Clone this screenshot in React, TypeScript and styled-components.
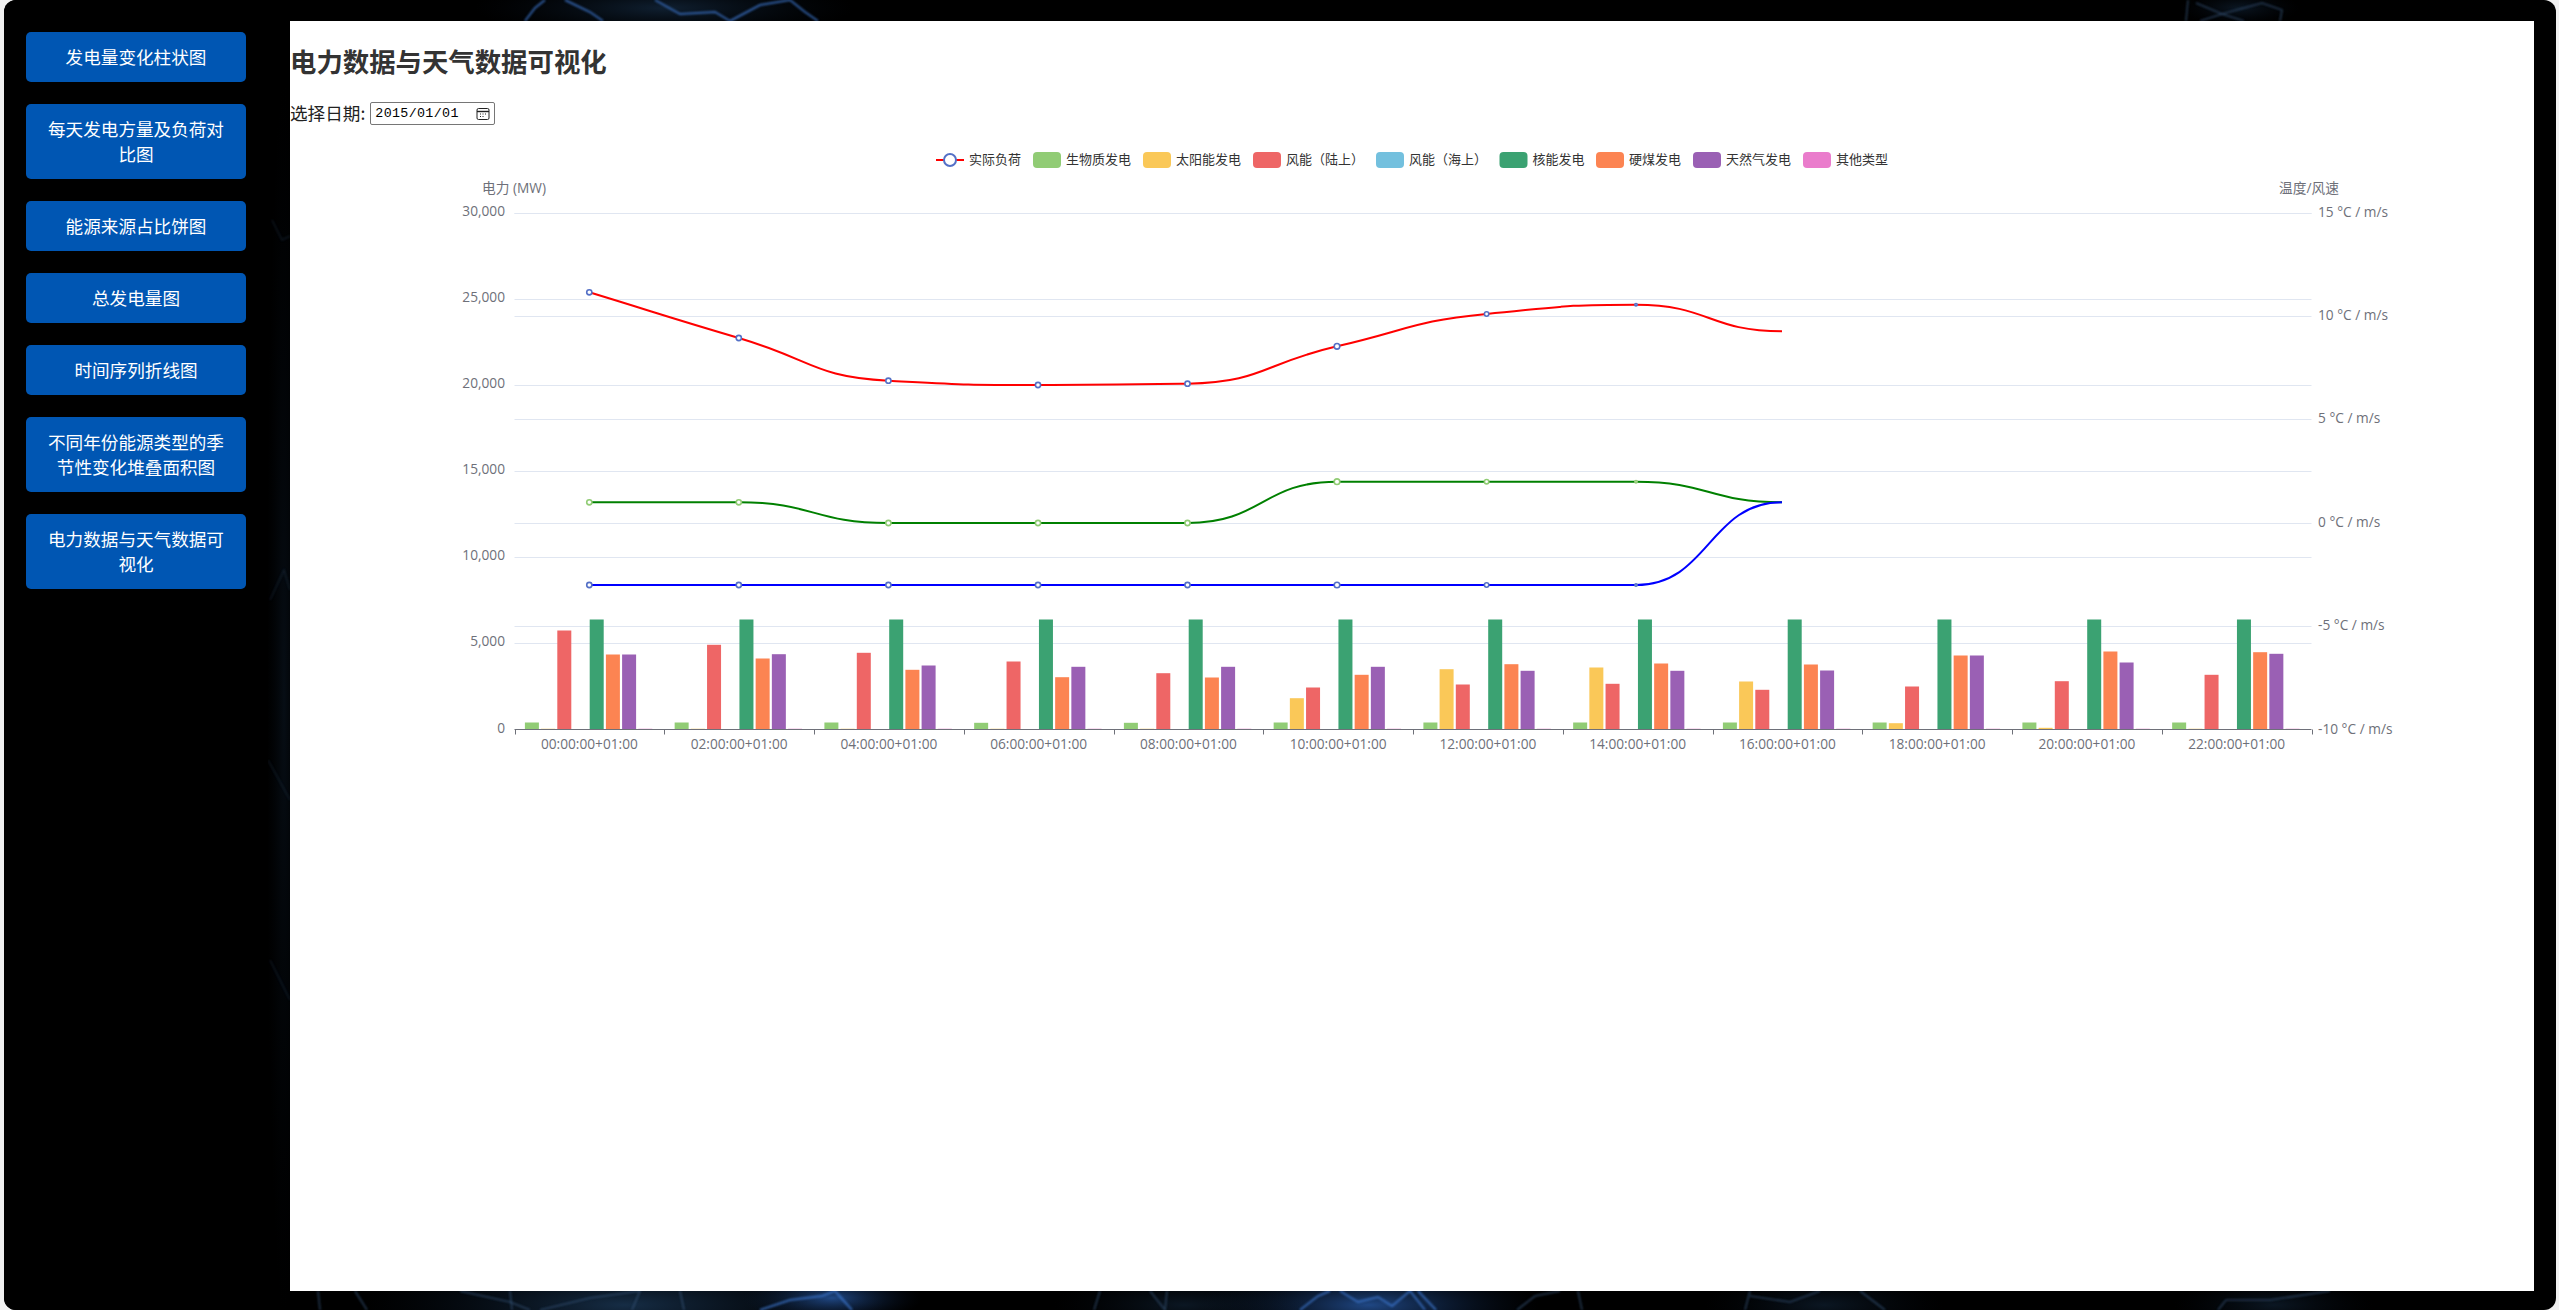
import React from "react";
import styled, { createGlobalStyle } from "styled-components";

const Global = createGlobalStyle`
  html, body { margin: 0; padding: 0; height: 100%; background: #f1f1f1; overflow: hidden; }
  #root { height: 100%; }
`;

const CJK = `"Noto Sans CJK SC", "Noto Sans", sans-serif`;
const LATIN = `"Open Sans", "Noto Sans CJK SC", sans-serif`;

const Page = styled.div`
  height: 1310px;
  padding: 0 3px 0 4px;
  box-sizing: border-box;
  background: #f1f1f1;
  font-family: ${CJK};
`;

const Shell = styled.div`
  position: relative;
  display: flex;
  height: 100%;
  background: #000;
  border-radius: 12px;
  overflow: hidden;
`;

const Backdrop = styled.svg`
  position: absolute;
  inset: 0;
  width: 100%;
  height: 100%;
`;

const Sidebar = styled.nav`
  position: relative;
  flex: 0 0 264px;
  box-sizing: border-box;
  display: flex;
  flex-direction: column;
  gap: 22px;
  padding: 32px 22px;
  background: #000;
`;

const NavButton = styled.button`
  width: 220px;
  box-sizing: border-box;
  padding: 11.5px 18px 13.5px;
  border: 0;
  border-radius: 5px;
  background: #0056b3;
  color: #fff;
  font-family: ${CJK};
  font-size: 17.6px;
  line-height: 25px;
  text-align: center;
`;

const Main = styled.main`
  position: relative;
  flex: 1;
  margin: 21px 22px 19px;
  background: #fff;
  min-width: 0;
`;

const Title = styled.h1`
  margin: 0;
  padding-top: 25px;
  font-family: ${CJK};
  font-size: 26.4px;
  line-height: 30px;
  font-weight: 700;
  color: #333;
`;

const DateRow = styled.div`
  display: flex;
  align-items: center;
  gap: 5px;
  height: 23px;
  margin-top: 26px;
  font-size: 17.6px;
  color: #222;
`;

const DateLabel = styled.span`
  padding-bottom: 2px;
`;

const DateBox = styled.div`
  display: flex;
  align-items: center;
  justify-content: space-between;
  width: 125px;
  height: 23px;
  box-sizing: border-box;
  padding: 0 4px;
  border: 1px solid #767676;
  border-radius: 2px;
  font-family: "Liberation Mono", monospace;
  font-size: 13.33px;
  letter-spacing: 0.35px;
  color: #000;
`;

const ChartSvg = styled.svg`
  display: block;
  margin-top: 5px;
`;

const AxisText = styled.text`
  font-family: ${LATIN};
  font-size: 13.7px;
  fill: #6e7079;
`;

const LegendText = styled.text`
  font-family: ${CJK};
  font-size: 13px;
  fill: #333;
`;

const NAV = [
  "发电量变化柱状图",
  "每天发电方量及负荷对比图",
  "能源来源占比饼图",
  "总发电量图",
  "时间序列折线图",
  "不同年份能源类型的季节性变化堆叠面积图",
  "电力数据与天气数据可视化",
];

const COLORS = ["#91cc75", "#fac858", "#ee6666", "#73c0de", "#3ba272", "#fc8452", "#9a60b4", "#ea7ccc"];

const LEGEND: [string, number][] = [
  ["生物质发电", 1033],
  ["太阳能发电", 1143],
  ["风能（陆上）", 1253],
  ["风能（海上）", 1376],
  ["核能发电", 1499.5],
  ["硬煤发电", 1596],
  ["天然气发电", 1693],
  ["其他类型", 1803],
];

// Bar heights in chart pixels: bio, solar, onshore, offshore, nuclear, coal, gas, other
const BARS: number[][] = [
  [7, 1, 99, 0, 110, 75, 75, 1],
  [7, 1, 84.7, 0, 110, 71, 75.3, 1],
  [7, 1, 76.7, 0, 110, 59.7, 64, 1],
  [6.7, 1, 68, 0, 110, 52.3, 62.7, 1],
  [6.7, 1, 56.3, 0, 110, 52, 62.7, 1],
  [7, 31.3, 42, 0, 110, 54.7, 62.7, 1],
  [7, 60.3, 45, 0, 110, 65.3, 58.7, 1],
  [7, 62, 45.7, 0, 110, 66, 58.7, 1],
  [7, 48, 39.7, 0, 110, 65, 59, 1],
  [7, 6.3, 43, 0, 110, 74, 74, 1],
  [7, 1.7, 48.3, 0, 110, 78, 67, 1],
  [7, 1, 54.7, 0, 110, 77.3, 75.7, 1],
];

const HOURS = ["00", "02", "04", "06", "08", "10", "12", "14", "16", "18", "20", "22"];

const X0 = 514.5;
const X1 = 2311.5;
const Y0 = 729.5;
const CAT = (X1 - X0) / 12;
const PX = [589.3, 738.8, 888.4, 1038, 1187.5, 1337, 1486.6, 1636, 1782];
const RADII = [2.6, 2.6, 2.6, 2.6, 2.6, 2.8, 2.2, 1.2];

const LINES = [
  { color: "#ff0000", dot: "#5470c6", ys: [292.3, 338, 380.7, 385, 383.7, 346.3, 314, 304.7, 331.3] },
  { color: "#008000", dot: "#91cc75", ys: [502.3, 502.3, 523, 523, 523, 481.7, 481.7, 481.7, 502.3] },
  { color: "#0000ff", dot: "#5470c6", ys: [585, 585, 585, 585, 585, 585, 585, 585, 502.3] },
];

function smooth(ys: number[]): string {
  const slope = (i: number) => (ys[i + 1] - ys[i]) / (PX[i + 1] - PX[i]);
  const tangent = (i: number) => {
    if (i === 0) return slope(0);
    if (i === ys.length - 1) return 0;
    const a = slope(i - 1);
    const b = slope(i);
    return a * b <= 0 ? 0 : (2 * a * b) / (a + b);
  };
  let d = `M${PX[0]} ${ys[0]}`;
  for (let i = 0; i < ys.length - 1; i++) {
    const h = (PX[i + 1] - PX[i]) / 2;
    d += `C${PX[i] + h} ${ys[i] + tangent(i) * h} ${PX[i + 1] - h} ${ys[i + 1] - tangent(i + 1) * h} ${PX[i + 1]} ${ys[i + 1]}`;
  }
  return d;
}

const LEFT_TICKS = ["0", "5,000", "10,000", "15,000", "20,000", "25,000", "30,000"];
const RIGHT_TICKS = ["-10", "-5", "0", "5", "10", "15"];

const Chart = () => (
  <ChartSvg width="2244" height="650" viewBox="290 130 2244 650">
    {/* legend */}
    <line x1="936" x2="964" y1="160" y2="160" stroke="#ff0000" strokeWidth="2" />
    <circle cx="950" cy="160" r="6" fill="#fff" stroke="#5470c6" strokeWidth="2" />
    <LegendText x="969" y="164">实际负荷</LegendText>
    {LEGEND.map(([name, x], i) => (
      <g key={name}>
        <rect x={x} y="152" width="28" height="16" rx="4" fill={COLORS[i]} />
        <LegendText x={x + 33} y="164">{name}</LegendText>
      </g>
    ))}

    {/* axis titles */}
    <AxisText x="514" y="192.5" textAnchor="middle">电力 (MW)</AxisText>
    <AxisText x="2309" y="192.5" textAnchor="middle">温度/风速</AxisText>

    {/* grid */}
    {LEFT_TICKS.map((t, i) => {
      const y = Math.round(Y0 - (i * 517) / 6) + 0.5;
      return (
        <g key={t}>
          {i > 0 && <line x1={X0} x2={X1} y1={y} y2={y} stroke="#e0e6f1" />}
          <AxisText x="505" y={y + 2.5} textAnchor="end">{t}</AxisText>
        </g>
      );
    })}
    {RIGHT_TICKS.map((t, i) => {
      const y = Math.round(Y0 - (i * 517) / 5) + 0.5;
      return (
        <g key={t}>
          {i > 0 && <line x1={X0} x2={X1} y1={y} y2={y} stroke="#e0e6f1" />}
          <AxisText x="2318" y={y + 3}>{t} °C / m/s</AxisText>
        </g>
      );
    })}

    {/* bars */}
    {BARS.map((row, c) =>
      row.map((h, s) =>
        h > 0 ? (
          <rect
            key={`${c}-${s}`}
            x={X0 + c * CAT + 10.4 + s * 16.2}
            y={Y0 - h}
            width="14"
            height={h}
            fill={COLORS[s]}
            opacity={h <= 1 ? 0.5 : 1}
          />
        ) : null
      )
    )}

    {/* x axis */}
    <line x1={X0} x2={X1} y1={Y0} y2={Y0} stroke="#6e7079" />
    {Array.from({ length: 13 }, (_, i) => (
      <line key={i} x1={Math.round(X0 + i * CAT) + 0.5} x2={Math.round(X0 + i * CAT) + 0.5} y1={Y0} y2={Y0 + 5} stroke="#6e7079" />
    ))}
    {HOURS.map((h, i) => (
      <AxisText key={h} x={X0 + (i + 0.5) * CAT} y="748.5" textAnchor="middle">{h}:00:00+01:00</AxisText>
    ))}

    {/* lines */}
    {LINES.map((l) => (
      <g key={l.color}>
        <path d={smooth(l.ys)} fill="none" stroke={l.color} strokeWidth="2" />
        {RADII.map((r, i) => (
          <circle key={i} cx={PX[i]} cy={l.ys[i]} r={r} fill="#fff" stroke={l.dot} strokeWidth="1.6" />
        ))}
      </g>
    ))}
  </ChartSvg>
);

const CalendarIcon = () => (
  <svg width="14" height="14" viewBox="0 0 14 14" fill="none">
    <rect x="1" y="1.5" width="12" height="11" rx="1.5" stroke="#222" strokeWidth="1" />
    <path d="M1 4.500h12" stroke="#222" strokeWidth="1.4" />
    <path d="M4 7h1M6.500 7h1M9 7h1M4 9.500h1M6.500 9.500h1" stroke="#222" strokeWidth="1.2" />
  </svg>
);

const BRIGHT = [
  "M1300 1310L1318 1296L1330 1291",
  "M1340 1291L1358 1302L1378 1297L1392 1306L1410 1291L1425 1310",
  "M1418 1291L1436 1310",
  "M760 1310L790 1300L822 1296L835 1291",
  "M835 1291L852 1310",
  "M525 21L535 8L545 0",
  "M565 0L590 12L603 21",
  "M655 0L680 14L715 12L730 21",
  "M730 21L760 5L790 0",
  "M790 0L805 12L818 21",
];
const DIM = [
  "M318 1291L320 1310", "M355 1291L367 1310",
  "M460 1291L510 1302L530 1310", "M540 1310L590 1298L640 1291L632 1310",
  "M510 1291L512 1310", "M680 1291L684 1310",
  "M1094 1310L1100 1291", "M1150 1291L1165 1310L1167 1291",
  "M1517 1310L1535 1296L1560 1291", "M1578 1291L1582 1310",
  "M1745 1310L1750 1291", "M1750 1296L1790 1302L1820 1291", "M1860 1291L1885 1310",
  "M2218 1310L2226 1300L2270 1300L2330 1291",
  "M2188 0L2186 21", "M2196 3L2222 14L2262 3L2282 10L2280 21", "M2222 14L2244 21", "M2200 21L2222 14",
];
const GUTTER = [
  "M272 220L282 240L290 236", "M270 600L284 570L290 590", "M268 760L290 800", "M270 960L290 1000",
];

const Background = () => (
  <Backdrop viewBox="0 0 2552 1310" preserveAspectRatio="none" aria-hidden="true">
    <defs>
      <radialGradient id="glow">
        <stop offset="0" stopColor="#2a5fb0" stopOpacity="0.75" />
        <stop offset="1" stopColor="#0a1a33" stopOpacity="0" />
      </radialGradient>
      <radialGradient id="haze">
        <stop offset="0" stopColor="#1a3552" stopOpacity="0.85" />
        <stop offset="1" stopColor="#071220" stopOpacity="0" />
      </radialGradient>
      <filter id="soft"><feGaussianBlur stdDeviation="1.2" /></filter>
    </defs>
    <ellipse cx="620" cy="1305" rx="260" ry="50" fill="url(#haze)" />
    <ellipse cx="828" cy="1298" rx="90" ry="26" fill="url(#glow)" />
    <ellipse cx="1365" cy="1305" rx="170" ry="40" fill="url(#glow)" />
    <ellipse cx="1180" cy="1305" rx="130" ry="30" fill="url(#haze)" opacity="0.5" />
    <ellipse cx="1820" cy="1305" rx="120" ry="30" fill="url(#haze)" opacity="0.5" />
    <ellipse cx="2270" cy="1305" rx="100" ry="26" fill="url(#haze)" opacity="0.5" />
    <ellipse cx="660" cy="8" rx="190" ry="30" fill="url(#haze)" opacity="0.7" />
    <ellipse cx="2235" cy="8" rx="60" ry="18" fill="url(#haze)" opacity="0.5" />
    <ellipse cx="280" cy="700" rx="18" ry="620" fill="url(#haze)" opacity="0.3" />
    <g transform="translate(-4 0)" fill="none" filter="url(#soft)">
      {GUTTER.map((d) => <path key={d} d={d} stroke="#3b5a80" strokeWidth="1.4" opacity="0.25" />)}
      {DIM.map((d) => <path key={d} d={d} stroke="#3b5a80" strokeWidth="1.6" opacity="0.6" />)}
      {BRIGHT.map((d) => <path key={d} d={d} stroke="#3f78d0" strokeWidth="2" opacity="0.75" />)}
    </g>
  </Backdrop>
);

export default function App() {
  return (
    <Page>
      <Global />
      <Shell>
        <Background />
        <Sidebar>
          {NAV.map((n) => <NavButton key={n}>{n}</NavButton>)}
        </Sidebar>
        <Main>
          <Title>电力数据与天气数据可视化</Title>
          <DateRow>
            <DateLabel>选择日期:</DateLabel>
            <DateBox>
              <span>2015/01/01</span>
              <CalendarIcon />
            </DateBox>
          </DateRow>
          <Chart />
        </Main>
      </Shell>
    </Page>
  );
}
